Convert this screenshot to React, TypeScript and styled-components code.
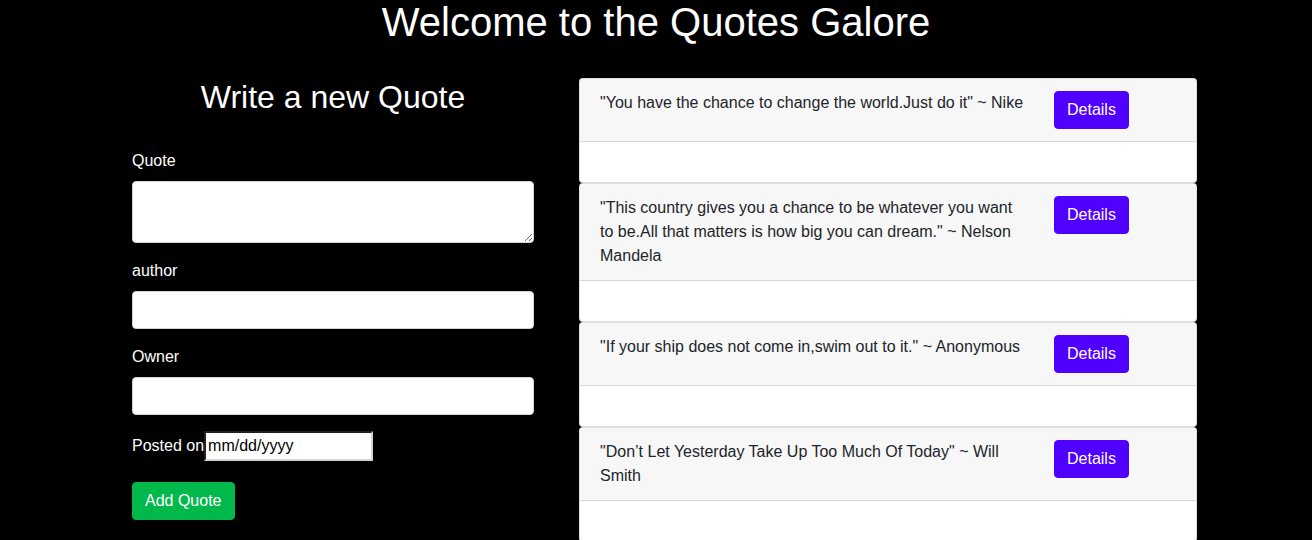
import React from "react";
import styled, { createGlobalStyle } from "styled-components";

const Global = createGlobalStyle`
  html, body {
    margin: 0;
    padding: 0;
    background: #000;
    color: #fff;
    font-family: "Liberation Sans", Arial, Helvetica, sans-serif;
    font-size: 16px;
    line-height: 1.5;
  }
  * { box-sizing: border-box; }
`;

const Title = styled.h1`
  margin: 0;
  padding-top: 0;
  height: 78px;
  font-size: 40px;
  font-weight: 400;
  line-height: 44px;
  text-align: center;
  color: #fff;
`;

const Layout = styled.div`
  display: flex;
  align-items: flex-start;
  gap: 45px;
  padding-left: 132px;
`;

const FormColumn = styled.div`
  width: 402px;
  display: flex;
  flex-direction: column;
`;

const FormHeading = styled.h2`
  margin: 0 0 33px;
  font-size: 32px;
  font-weight: 400;
  line-height: 1.2;
  text-align: center;
  color: #fff;
`;

const FormGroup = styled.div`
  display: flex;
  flex-direction: column;
  margin-bottom: 16px;
`;

const Label = styled.label`
  display: block;
  margin-bottom: 8px;
  color: #fff;
`;

const fieldStyles = `
  display: block;
  width: 100%;
  padding: 6px 12px;
  font-family: inherit;
  font-size: 16px;
  line-height: 24px;
  color: #495057;
  background: #fff;
  border: 1px solid #ced4da;
  border-radius: 4px;
  margin: 0;
`;

const TextArea = styled.textarea`
  ${fieldStyles}
  height: 62px;
`;

const TextInput = styled.input`
  ${fieldStyles}
  height: 38px;
`;

const DateRow = styled.div`
  display: flex;
  align-items: center;
  margin-bottom: 21px;
`;

const DateInput = styled.input`
  width: 169px;
  height: 30px;
  padding: 1px 2px;
  font-family: inherit;
  font-size: 16px;
  line-height: 24px;
  color: #000;
  background: #fff;
  border: 2px inset #8f8f8f;
  border-color: #767676 #d4d4d4 #d4d4d4 #767676;
  margin: 0;
`;

const Button = styled.button<{ $bg: string }>`
  display: inline-block;
  align-self: flex-start;
  justify-self: start;
  height: 38px;
  padding: 6px 12px;
  font-family: inherit;
  font-size: 16px;
  line-height: 24px;
  color: #fff;
  background: ${(p) => p.$bg};
  border: 1px solid ${(p) => p.$bg};
  border-radius: 4px;
  cursor: pointer;
`;

const QuoteList = styled.div`
  width: 618px;
  display: flex;
  flex-direction: column;
`;

const Card = styled.div`
  background: #fff;
  border: 1px solid rgba(0, 0, 0, 0.125);
  border-radius: 4px;
  overflow: hidden;
`;

const CardHeader = styled.div`
  display: grid;
  grid-template-columns: 426px auto;
  column-gap: 28px;
  align-items: start;
  padding: 12px 20px;
  background: #f7f7f7;
  border-bottom: 1px solid rgba(0, 0, 0, 0.125);
`;

const QuoteText = styled.p`
  margin: 0;
  color: #212529;
  font-size: 16px;
  line-height: 24px;
`;

const CardBody = styled.div`
  height: 40px;
`;

const quotes = [
  { text: "You have the chance to change the world.Just do it", author: "Nike" },
  {
    text: "This country gives you a chance to be whatever you want to be.All that matters is how big you can dream.",
    author: "Nelson Mandela",
  },
  { text: "If your ship does not come in,swim out to it.", author: "Anonymous" },
  { text: "Don\u2019t Let Yesterday Take Up Too Much Of Today", author: "Will Smith" },
];

export default function App() {
  return (
    <>
      <Global />
      <Title>Welcome to the Quotes Galore</Title>
      <Layout>
        <FormColumn>
          <FormHeading>Write a new Quote</FormHeading>
          <FormGroup>
            <Label>Quote</Label>
            <TextArea rows={2} />
          </FormGroup>
          <FormGroup>
            <Label>author</Label>
            <TextInput type="text" />
          </FormGroup>
          <FormGroup>
            <Label>Owner</Label>
            <TextInput type="text" />
          </FormGroup>
          <DateRow>
            <span>Posted on</span>
            <DateInput type="text" defaultValue="mm/dd/yyyy" />
          </DateRow>
          <Button $bg="#00b94a">Add Quote</Button>
        </FormColumn>
        <QuoteList>
          {quotes.map((q) => (
            <Card key={q.author}>
              <CardHeader>
                <QuoteText>
                  "{q.text}" ~ {q.author}
                </QuoteText>
                <Button $bg="#5000ff">Details</Button>
              </CardHeader>
              <CardBody />
            </Card>
          ))}
        </QuoteList>
      </Layout>
    </>
  );
}
